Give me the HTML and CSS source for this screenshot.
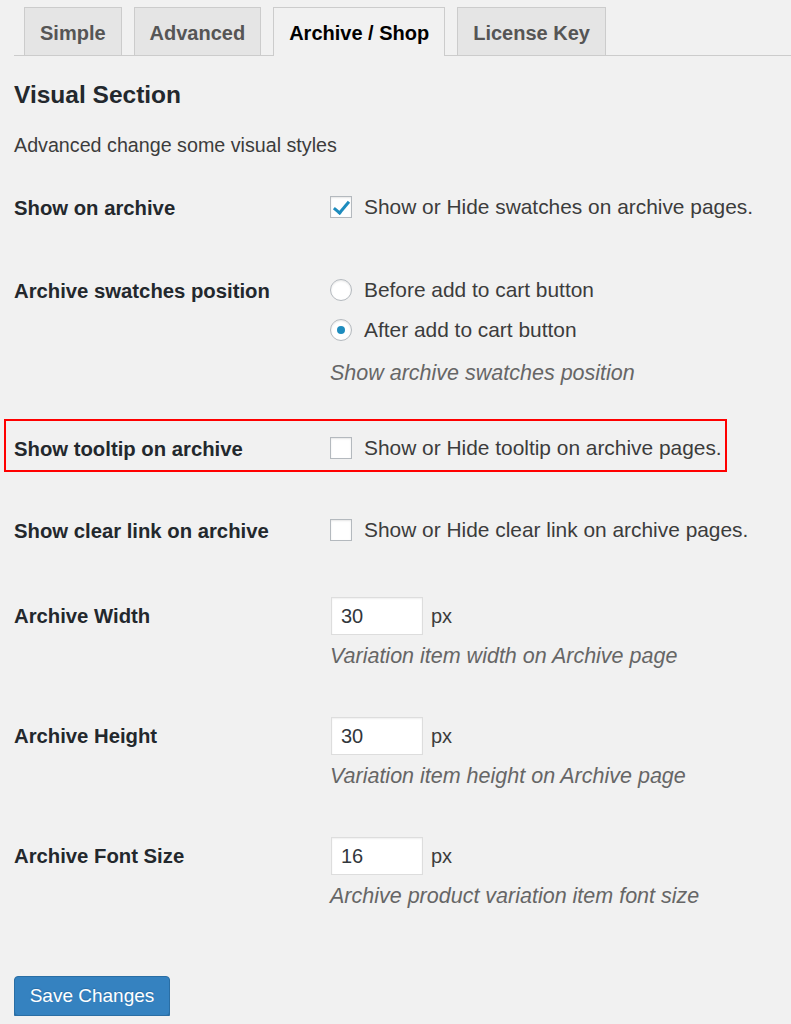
FILE: index.html
```html
<!DOCTYPE html>
<html lang="en">
<head>
  <meta charset="UTF-8">
  <title>Swatches Settings</title>
  <link rel="stylesheet" href="styles.css">
</head>
<body>
  <div class="wrap">
    <!-- tabs -->
    <nav class="nav-tabs">
      <a class="nav-tab" href="#">Simple</a>
      <a class="nav-tab" href="#">Advanced</a>
      <a class="nav-tab active" href="#">Archive / Shop</a>
      <a class="nav-tab" href="#">License Key</a>
    </nav>

    <form>
      <h2>Visual Section</h2>
      <p class="section-desc">Advanced change some visual styles</p>

      <div class="form-row">
        <div class="row-label">Show on archive</div>
        <div class="row-field">
          <label class="line"><span class="checkbox checked"></span>Show or Hide swatches on archive pages.</label>
        </div>
      </div>

      <div class="form-row">
        <div class="row-label">Archive swatches position</div>
        <div class="row-field radios">
          <label class="line"><span class="radio"></span>Before add to cart button</label>
          <label class="line"><span class="radio checked"></span>After add to cart button</label>
          <p class="description">Show archive swatches position</p>
        </div>
      </div>

      <div class="form-row highlight">
        <div class="row-label">Show tooltip on archive</div>
        <div class="row-field">
          <label class="line"><span class="checkbox"></span>Show or Hide tooltip on archive pages.</label>
        </div>
      </div>

      <div class="form-row">
        <div class="row-label">Show clear link on archive</div>
        <div class="row-field">
          <label class="line"><span class="checkbox"></span>Show or Hide clear link on archive pages.</label>
        </div>
      </div>

      <div class="form-row input-row">
        <div class="row-label">Archive Width</div>
        <div class="row-field">
          <div class="input-line"><input type="text" value="30"><span class="unit">px</span></div>
          <p class="description">Variation item width on Archive page</p>
        </div>
      </div>

      <div class="form-row input-row">
        <div class="row-label">Archive Height</div>
        <div class="row-field">
          <div class="input-line"><input type="text" value="30"><span class="unit">px</span></div>
          <p class="description">Variation item height on Archive page</p>
        </div>
      </div>

      <div class="form-row input-row">
        <div class="row-label">Archive Font Size</div>
        <div class="row-field">
          <div class="input-line"><input type="text" value="16"><span class="unit">px</span></div>
          <p class="description">Archive product variation item font size</p>
        </div>
      </div>

      <div class="submit">
        <button type="button" class="button-primary">Save Changes</button>
      </div>
    </form>
  </div>
</body>
</html>
```

FILE: styles.css
```css
body {
  margin: 0;
  background-color: #f1f1f1;
  font-family: "Liberation Sans", Arial, sans-serif;
  font-size: 20px;
  color: #444444;
  overflow: hidden;
}
.wrap {
  padding-left: 14px;
}
.nav-tabs {
  display: flex;
  gap: 12px;
  margin-top: 7px;
  padding-left: 10px;
  border-bottom: 1px solid #cccccc;
  height: 48px;
}
.nav-tab {
  display: block;
  box-sizing: border-box;
  height: 48px;
  padding: 3px 15px 0;
  line-height: 45px;
  border: 1px solid #cccccc;
  border-bottom: none;
  background-color: #e5e5e5;
  color: #555555;
  font-weight: bold;
  font-size: 20px;
  text-decoration: none;
}
.nav-tab.active {
  background-color: #f1f1f1;
  color: #000000;
  height: 49px;
}
h2 {
  margin: 25px 0 0;
  font-size: 24.5px;
  line-height: 28px;
  color: #23282d;
}
.section-desc {
  margin: 22px 0 12px;
  line-height: 28px;
  font-size: 19.7px;
  color: #3c3c3c;
}
.form-row {
  display: grid;
  grid-template-columns: 316px 1fr;
  padding: 22px 0 32px;
}
.row-label {
  font-weight: bold;
  font-size: 20.3px;
  color: #23282d;
  line-height: 28px;
  padding-top: 1px;
}
.line {
  display: flex;
  align-items: center;
  gap: 12px;
  line-height: 28px;
  font-size: 20.9px;
  color: #3c3c3c;
}
.radios .line + .line {
  margin-top: 12px;
}
.checkbox {
  width: 20px;
  height: 20px;
  border: 1px solid #b4b9be;
  background-color: #ffffff;
  box-shadow: inset 0 1px 2px rgba(0, 0, 0, 0.1);
  position: relative;
  flex: none;
}
.checkbox.checked::after {
  content: "";
  position: absolute;
  left: 6px;
  top: 1px;
  width: 6px;
  height: 13px;
  border-right: 3px solid #1e8cbe;
  border-bottom: 3px solid #1e8cbe;
  transform: rotate(40deg);
}
.radio {
  width: 20px;
  height: 20px;
  border: 1px solid #b4b9be;
  border-radius: 50%;
  background-color: #ffffff;
  box-shadow: inset 0 1px 2px rgba(0, 0, 0, 0.1);
  position: relative;
  flex: none;
}
.radio.checked::after {
  content: "";
  position: absolute;
  left: 6px;
  top: 6px;
  width: 8px;
  height: 8px;
  border-radius: 50%;
  background-color: #1e8cbe;
}
.description {
  margin: 15px 0 0;
  line-height: 28px;
  font-style: italic;
  font-size: 21.5px;
  color: #666666;
}
.input-row .description {
  margin-top: 7px;
}
.highlight {
  box-sizing: border-box;
  width: 723px;
  margin: 0 0 22px -10px;
  padding: 13px 0 7px 8px;
  border: 2px solid #ff0000;
}
.input-line {
  display: flex;
  align-items: center;
  gap: 8px;
}
.input-row {
  padding: 20px 0 27px;
}
.input-row .row-label {
  padding-top: 5px;
}
input[type="text"] {
  width: 92px;
  height: 38px;
  box-sizing: border-box;
  margin: 0 0 0 1px;
  padding: 0 9px;
  border: 1px solid #dddddd;
  box-shadow: inset 0 1px 2px rgba(0, 0, 0, 0.07);
  background-color: #ffffff;
  font-family: "Liberation Sans", Arial, sans-serif;
  font-size: 20px;
  color: #32373c;
}
.unit {
  color: #3c3c3c;
}
.submit {
  padding-top: 39px;
}
.button-primary {
  height: 40px;
  width: 156px;
  padding: 0;
  background-color: #3582c0;
  border: 1px solid #2a6ea4;
  border-radius: 4px;
  box-shadow: 0 2px 0 #2a6ea4;
  color: #ffffff;
  font-family: "Liberation Sans", Arial, sans-serif;
  font-size: 19px;
  text-shadow: 0 -1px 1px #2a6ea4;
  cursor: pointer;
}
```
